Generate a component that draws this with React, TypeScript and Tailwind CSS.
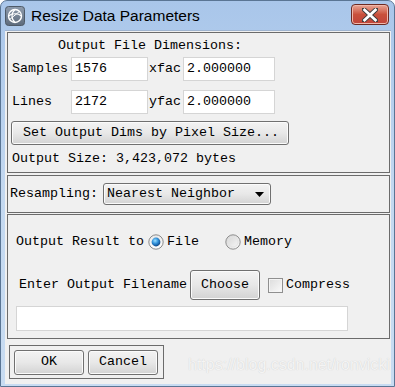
import React from "react";

const mono = { fontFamily: '"Liberation Mono", "DejaVu Sans Mono", monospace' };

function Field({ w, h = 24, value }: { w: number; h?: number; value?: string }) {
  return (
    <div
      className="bg-white border border-[#d5d5d5] flex items-center pl-[3px] text-black"
      style={{ width: w, height: h }}
    >
      {value}
    </div>
  );
}

function Btn({ w, h, children, className = "" }: { w: number; h: number; children: React.ReactNode; className?: string }) {
  return (
    <div
      className={
        "border border-[#707070] rounded-[3px] bg-gradient-to-b from-[#f3f3f3] via-[#e8e8e8] to-[#d3d3d3] flex items-center shadow-[inset_0_0_0_1px_#fbfbfb] " +
        className
      }
      style={{ width: w, height: h }}
    >
      {children}
    </div>
  );
}

function RadioOn() {
  return (
    <svg width="16" height="16" viewBox="0 0 16 16">
      <defs>
        <radialGradient id="rb" cx="0.4" cy="0.35" r="0.7">
          <stop offset="0" stopColor="#9be0ff" />
          <stop offset="0.5" stopColor="#2f8ed8" />
          <stop offset="1" stopColor="#0b3d7a" />
        </radialGradient>
        <linearGradient id="rr" x1="0" y1="0" x2="0" y2="1">
          <stop offset="0" stopColor="#e8e8e8" />
          <stop offset="1" stopColor="#ffffff" />
        </linearGradient>
      </defs>
      <circle cx="8" cy="8" r="7.2" fill="url(#rr)" stroke="#8a8a8a" strokeWidth="1" />
      <circle cx="8" cy="8" r="4.4" fill="url(#rb)" />
    </svg>
  );
}

function RadioOff() {
  return (
    <svg width="16" height="16" viewBox="0 0 16 16">
      <defs>
        <linearGradient id="ro" x1="0" y1="0" x2="1" y2="1">
          <stop offset="0" stopColor="#d2d2d2" />
          <stop offset="1" stopColor="#fbfbfb" />
        </linearGradient>
      </defs>
      <circle cx="8" cy="8" r="7.2" fill="url(#ro)" stroke="#8f8f8f" strokeWidth="1" />
      <circle cx="8" cy="8" r="5" fill="none" stroke="#e4e4e4" strokeWidth="1" />
    </svg>
  );
}

export default function App() {
  return (
    <div
      className="relative w-[395px] h-[387px] rounded-t-[7px] border border-[#5a7594] bg-gradient-to-b from-[#a9c6ea] via-[#c3d8f0] to-[#c8dcf2] overflow-hidden"
    >
      {/* Title bar */}
      <div className="h-[29px] flex items-center">
        <div className="ml-[4px] mt-[1px]">
          <svg width="20" height="20" viewBox="0 0 20 20">
            <defs>
              <linearGradient id="ic" x1="0" y1="0" x2="0" y2="1">
                <stop offset="0" stopColor="#8f9cad" />
                <stop offset="1" stopColor="#5d6b7c" />
              </linearGradient>
            </defs>
            <rect x="0.5" y="0.5" width="19" height="19" rx="3" fill="url(#ic)" stroke="#4e5a68" />
            <circle cx="10" cy="10" r="6.5" fill="none" stroke="#fff" strokeWidth="1.4" />
            <path d="M3.5 10 C7 7, 13 7, 16.5 10" fill="none" stroke="#fff" strokeWidth="1.2" />
            <path d="M10 3.5 C6 7, 6 13, 10 16.5" fill="none" stroke="#fff" strokeWidth="1.2" />
            <path d="M4 14 L15 5" fill="none" stroke="#fff" strokeWidth="1" />
          </svg>
        </div>
        <div
          className="ml-[6px] text-[15.5px] text-black"
          style={{ fontFamily: '"Liberation Sans", Arial, sans-serif' }}
        >
          Resize Data Parameters
        </div>
        <div className="ml-auto mr-[5px] mt-[-2px] w-[38px] h-[21px] rounded-[4px] border border-[#6d2a22] bg-gradient-to-b from-[#e8a596] via-[#c9503b] to-[#c0443a] flex items-center justify-center shadow-[inset_0_0_0_1px_#f0b7aa]">
          <svg width="16" height="14" viewBox="0 0 16 14">
            <path d="M2 1.5 L14 12.5 M14 1.5 L2 12.5" stroke="#3d3d3d" strokeWidth="4.6" strokeLinecap="square" />
            <path d="M2.6 2 L13.4 12 M13.4 2 L2.6 12" stroke="#ffffff" strokeWidth="2.8" strokeLinecap="square" />
          </svg>
        </div>
      </div>

      {/* Client area */}
      <div
        className="ml-[4px] w-[386px] h-[354px] bg-[#f0f0f0] border-t border-[#9fb4cf] flex flex-col text-[13.33px] leading-[16px] text-black"
        style={mono}
      >
        {/* Panel 1 */}
        <div className="ml-[2px] mt-[1px] w-[383px] h-[141px] border border-[#6b6b6b] flex flex-col">
          <div className="pl-[50px] pt-[5px]">Output File Dimensions:</div>
          <div className="flex items-center mt-[3px] pl-[4px]">
            <div className="w-[59px]">Samples</div>
            <Field w={77} value="1576" />
            <div className="w-[35px] pl-[1px]">xfac</div>
            <Field w={92} value="2.000000" />
          </div>
          <div className="flex items-center mt-[9px] pl-[4px]">
            <div className="w-[59px]">Lines</div>
            <Field w={77} value="2172" />
            <div className="w-[35px] pl-[1px]">yfac</div>
            <Field w={92} value="2.000000" />
          </div>
          <div className="mt-[7px] ml-[3px]">
            <Btn w={278} h={24} className="pl-[11px]">
              Set Output Dims by Pixel Size...
            </Btn>
          </div>
          <div className="mt-[6px] pl-[4px]">Output Size: 3,423,072 bytes</div>
        </div>

        {/* Panel 2 */}
        <div className="ml-[2px] mt-[2px] w-[383px] h-[38px] border border-[#6b6b6b] flex items-center">
          <div className="pl-[2px] w-[95px]">Resampling:</div>
          <Btn w={168} h={22} className="pl-[3px] pr-[6px] justify-between">
            <span>Nearest Neighbor</span>
            <svg width="9" height="5" viewBox="0 0 9 5">
              <path d="M0 0 L9 0 L4.5 5 Z" fill="#000" />
            </svg>
          </Btn>
        </div>

        {/* Panel 3 */}
        <div className="ml-[2px] mt-[1px] w-[383px] h-[125px] border border-[#6b6b6b] flex flex-col">
          <div className="flex items-center mt-[19px] pl-[8px]">
            <span>Output Result to</span>
            <span className="ml-[4px] flex items-center"><RadioOn /></span>
            <span className="ml-[3px]">File</span>
            <span className="ml-[26px] flex items-center"><RadioOff /></span>
            <span className="ml-[3px]">Memory</span>
          </div>
          <div className="flex items-center mt-[20px] pl-[11px]">
            <span className="w-[171px]">Enter Output Filename</span>
            <Btn w={70} h={30} className="justify-center">Choose</Btn>
            <div className="ml-[8px] w-[15px] h-[15px] border border-[#8f8f8f] bg-gradient-to-br from-[#dcdcdc] to-[#fafafa] shadow-[inset_0_0_0_1px_#f4f4f4]" />
            <span className="ml-[3px]">Compress</span>
          </div>
          <div className="mt-[6px] ml-[8px]">
            <Field w={332} h={25} />
          </div>
        </div>

        {/* Buttons */}
        <div className="ml-[4px] mt-[6px] w-[155px] h-[34px] border border-[#6b6b6b] flex items-center pl-[4px] gap-[4px]">
          <Btn w={70} h={25} className="justify-center">OK</Btn>
          <Btn w={70} h={25} className="justify-center">Cancel</Btn>
        </div>
      </div>

      {/* watermark */}
      <div
        className="absolute left-[187px] top-[354px] whitespace-nowrap text-[16px] leading-[20px] text-[#f4f4f4] [text-shadow:0_0_1px_#c8c8c8]"
        style={{ fontFamily: '"Liberation Sans", Arial, sans-serif' }}
      >
        https://blog.csdn.net/ronvicki
      </div>
    </div>
  );
}
